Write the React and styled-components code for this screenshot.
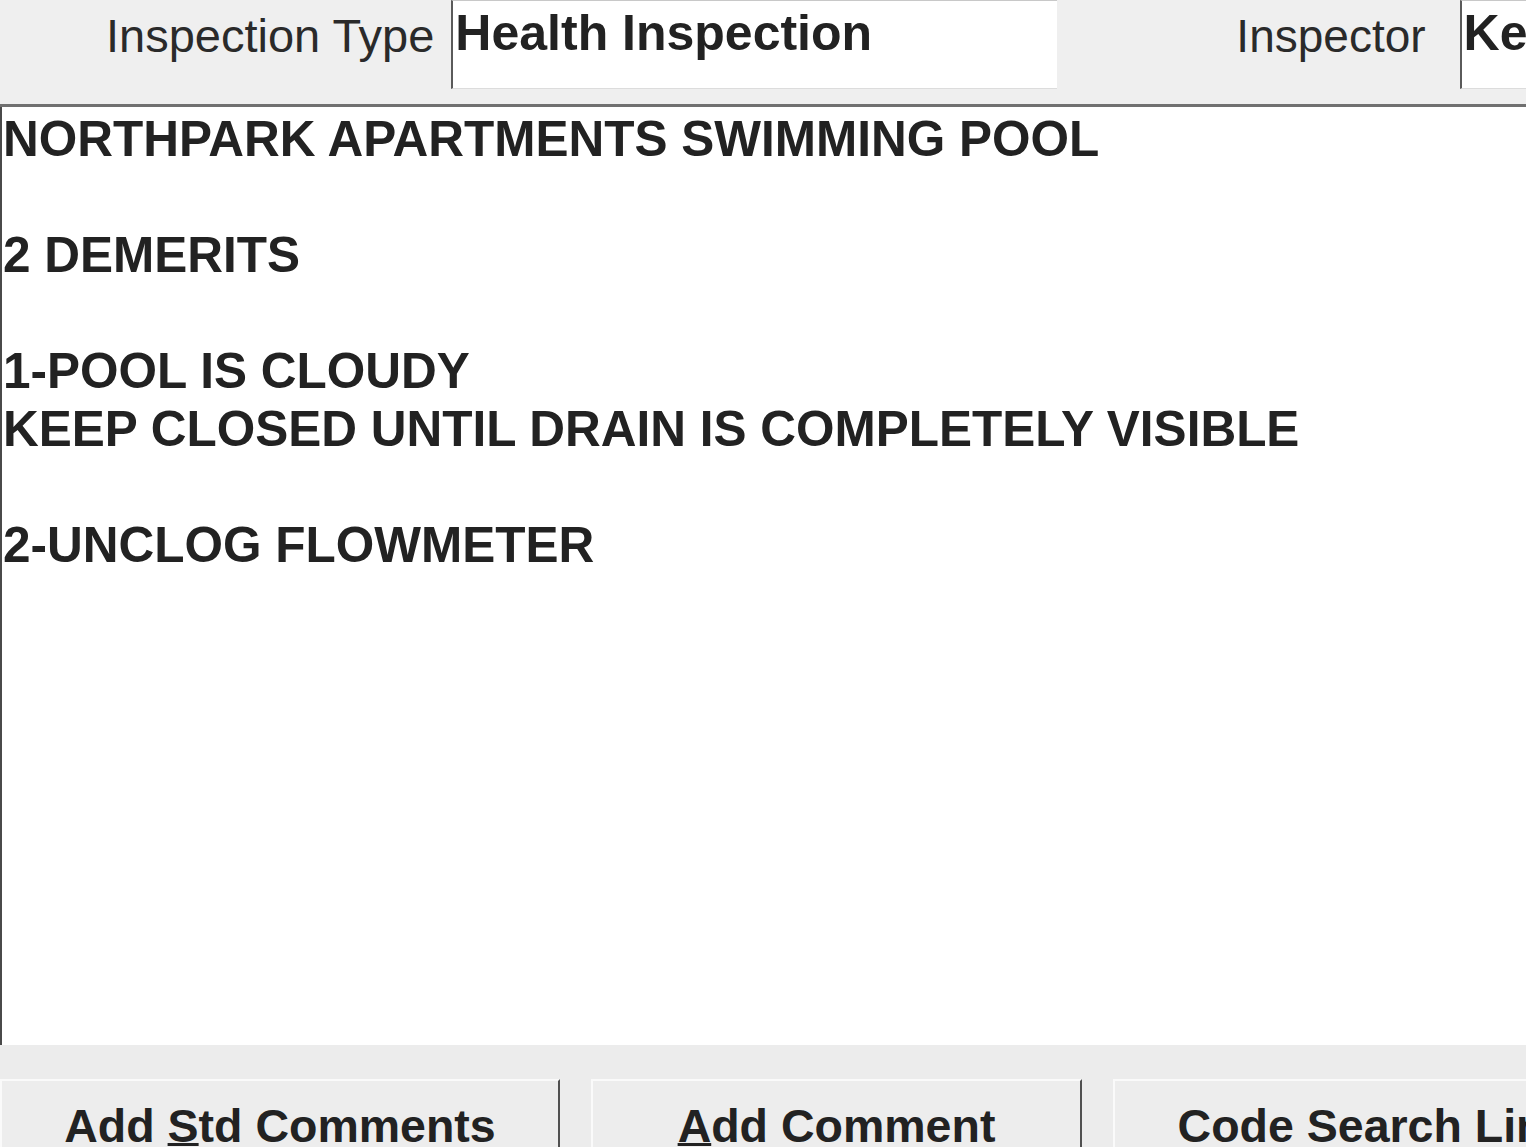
import styled, { createGlobalStyle } from "styled-components";

const GlobalStyle = createGlobalStyle`
  html, body {
    margin: 0;
    padding: 0;
    background: #ececec;
    overflow: hidden;
  }
  body {
    font-family: "Liberation Sans", Arial, sans-serif;
    color: #222;
  }
`;

const Screen = styled.div`
  width: 1526px;
  height: 1147px;
  display: flex;
  flex-direction: column;
  overflow: hidden;
  background: #ececec;
`;

const HeaderBar = styled.div`
  height: 104px;
  flex-shrink: 0;
  display: flex;
  align-items: flex-start;
  overflow: hidden;
  background: #efefef;
  border-bottom: 3px solid #707070;
`;

const Label = styled.span`
  flex-shrink: 0;
  margin-left: ${(p) => p.offset}px;
  margin-top: 8px;
  font-size: ${(p) => p.size}px;
  line-height: 56px;
  color: #2a2a2a;
  white-space: nowrap;
`;

const Field = styled.div`
  flex-shrink: 0;
  box-sizing: border-box;
  width: ${(p) => p.width}px;
  height: 89px;
  margin-left: ${(p) => p.gap}px;
  padding: 4px 0 0 2px;
  background: #fff;
  border-left: 2px solid #5a5a5a;
  border-top: 1px solid #c8c8c8;
  border-bottom: 1px solid #dcdcdc;
  font-size: 50px;
  font-weight: 700;
  line-height: 56px;
  white-space: nowrap;
  overflow: hidden;
`;

const NotesArea = styled.div`
  flex: 1;
  box-sizing: border-box;
  margin-bottom: 34px;
  padding: 3px 0 0 1px;
  background: #fff;
  border-left: 2px solid #4a4a4a;
  font-size: 49.5px;
  font-weight: 700;
  line-height: 58px;
  white-space: pre;
  overflow: hidden;
`;

const ButtonRow = styled.div`
  height: 68px;
  flex-shrink: 0;
  display: flex;
  gap: 31px;
  overflow: hidden;
`;

const ActionButton = styled.button`
  flex-shrink: 0;
  box-sizing: border-box;
  width: ${(p) => p.width}px;
  height: 100px;
  padding: 19px 0 0;
  display: flex;
  justify-content: center;
  align-items: flex-start;
  background: #ededed;
  border: none;
  border-top: 2px solid #fafafa;
  border-left: 2px solid #fafafa;
  border-right: 2px solid #505050;
  font-family: "Liberation Sans", Arial, sans-serif;
  font-size: 46.5px;
  font-weight: 700;
  line-height: 52px;
  color: #222;
  white-space: nowrap;

  u {
    text-decoration-thickness: 3px;
    text-underline-offset: 1px;
  }
`;

const notes = `NORTHPARK APARTMENTS SWIMMING POOL

2 DEMERITS

1-POOL IS CLOUDY
KEEP CLOSED UNTIL DRAIN IS COMPLETELY VISIBLE

2-UNCLOG FLOWMETER`;

export default function App() {
  return (
    <Screen>
      <GlobalStyle />
      <HeaderBar>
        <Label offset={106} size={47}>
          Inspection Type
        </Label>
        <Field gap={17} width={606}>
          Health Inspection
        </Field>
        <Label offset={179} size={46}>
          Inspector
        </Label>
        <Field gap={34} width={300}>
          Kevin
        </Field>
      </HeaderBar>
      <NotesArea>{notes}</NotesArea>
      <ButtonRow>
        <ActionButton width={560}>
          Add&nbsp;<u>S</u>td Comments
        </ActionButton>
        <ActionButton width={491}>
          <u>A</u>dd Comment
        </ActionButton>
        <ActionButton width={522}>Code Search Link</ActionButton>
      </ButtonRow>
    </Screen>
  );
}
